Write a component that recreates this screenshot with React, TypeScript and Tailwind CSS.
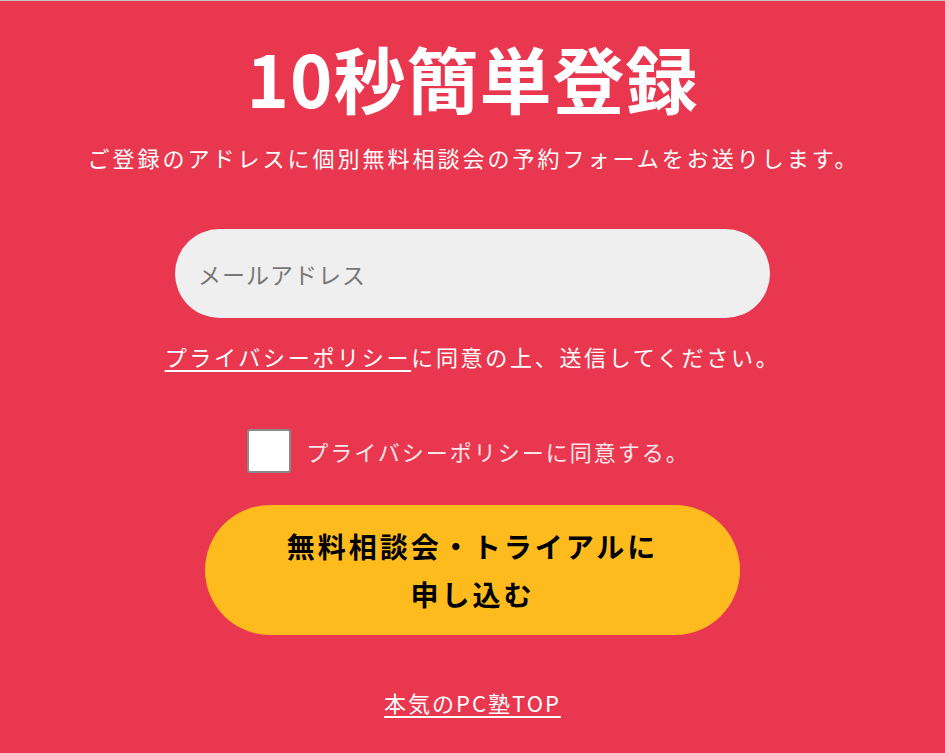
import { useState } from 'react';

const font = "font-['Noto_Sans_CJK_JP','Noto_Sans',sans-serif]";

export default function App() {
  const [email, setEmail] = useState('');
  const [agreed, setAgreed] = useState(false);

  return (
    <div className={`min-h-screen bg-[#e8374e] border-t border-[#c9c3c4] flex flex-col items-center text-white ${font}`}>
      {/* Title */}
      <h1 className="pt-[40px] text-[72px] leading-none font-bold tracking-[1px]">10秒簡単登録</h1>
      <p className="mt-[30px] text-[22px] leading-[28px] tracking-[3px] ml-[2px]">
        ご登録のアドレスに個別無料相談会の予約フォームをお送りします。
      </p>

      {/* Email */}
      <input
        type="email"
        value={email}
        onChange={(e) => setEmail(e.target.value)}
        placeholder="メールアドレス"
        className="mt-[58px] w-[595px] h-[89px] rounded-full bg-[#efefef] px-[23px] text-[23px] tracking-[1px] text-[#333] placeholder:text-[#777] outline-none"
      />

      <p className="mt-[24px] text-[22px] leading-[28px] tracking-[2.7px]">
        <a href="#" className="underline underline-offset-[4px]">プライバシーポリシー</a>
        に同意の上、送信してください。
      </p>

      {/* Agree */}
      <label className="mt-[59px] -ml-[8px] flex items-center gap-[15px] cursor-pointer">
        <span className="w-[44px] h-[44px] rounded-[3px] border-2 border-[#8a8a8a] bg-white flex items-center justify-center">
          <input
            type="checkbox"
            checked={agreed}
            onChange={(e) => setAgreed(e.target.checked)}
            className="hidden"
          />
          {agreed && <span className="text-[#e8374e] text-[26px] leading-none">✓</span>}
        </span>
        <span className="text-[22px] leading-[28px] tracking-[2px] text-[#fbe6e9]">
          プライバシーポリシーに同意する。
        </span>
      </label>

      {/* Submit */}
      <button className="mt-[32px] w-[535px] h-[130px] rounded-full bg-[#fdbb1e] text-black text-[28px] font-bold leading-[48px] tracking-[3px]">
        無料相談会・トライアルに
        <br />
        申し込む
      </button>

      <a href="#" className="mt-[53px] text-[22px] leading-[28px] tracking-[2px] underline underline-offset-[4px]">
        本気のPC塾TOP
      </a>
    </div>
  );
}
